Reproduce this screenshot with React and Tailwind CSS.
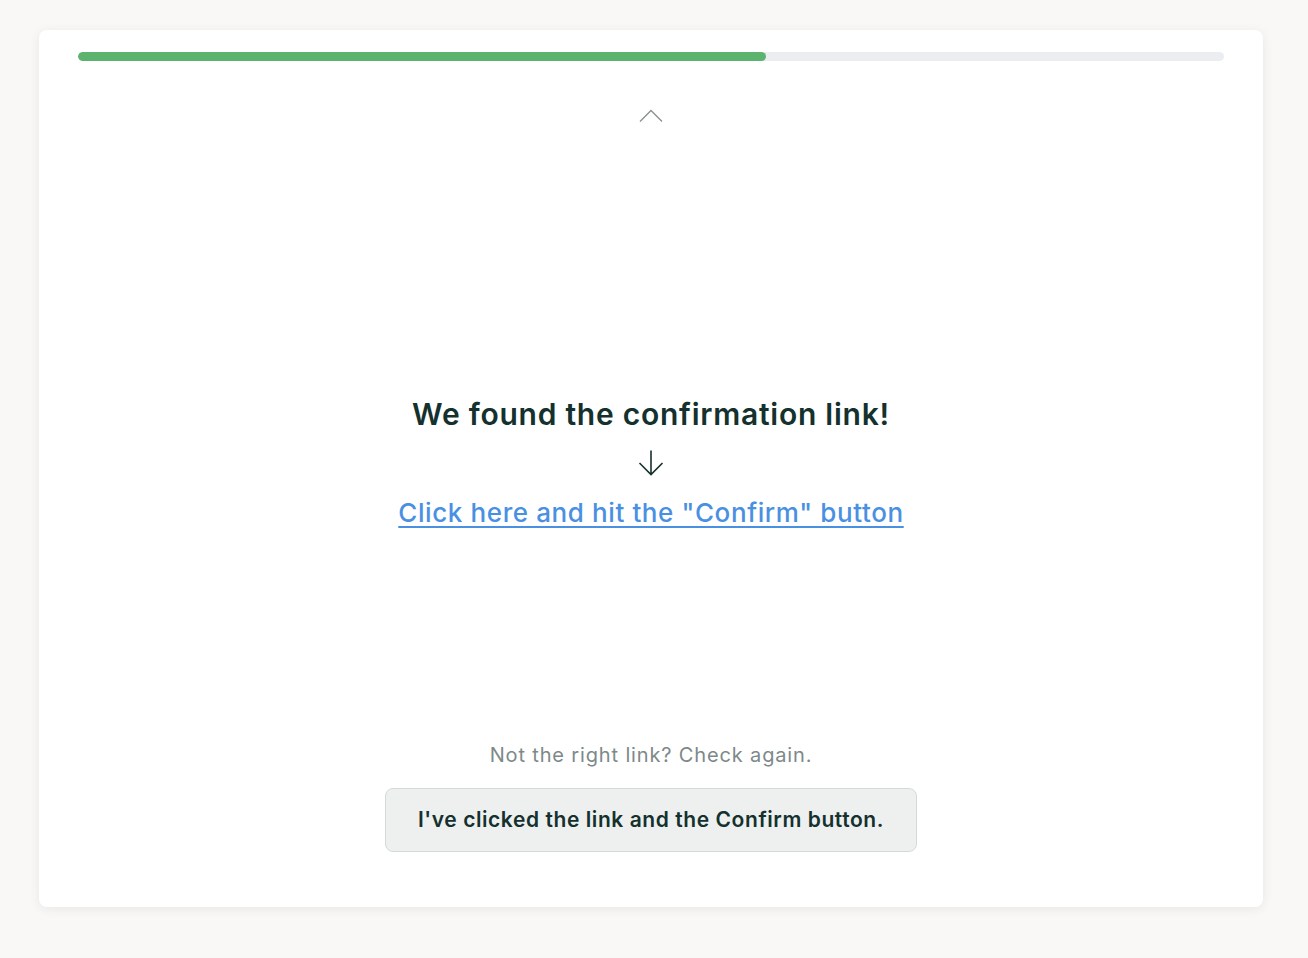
export default function App() {
  return (
    <div className="min-h-[958px] w-full bg-[#f9f8f6] pt-[30px] pb-[51px] pl-[39px] pr-[45px]" style={{ fontFamily: 'Inter, "Noto Sans", sans-serif' }}>
      <div className="h-[877px] rounded-[8px] bg-white shadow-[0_2px_12px_rgba(0,0,0,0.07)] flex flex-col items-center px-[39px] pt-[22px] pb-[55px]">
        <div className="w-full h-[9px] rounded-full bg-[#ebedf0] overflow-hidden">
          <div className="h-full w-[60%] rounded-full bg-[#5bb36e]"></div>
        </div>
        <svg className="mt-[47px]" width="26" height="16" viewBox="0 0 26 16" fill="none">
          <path d="M2 13.5 L13 2.5 L24 13.5" stroke="#8a9292" strokeWidth="1.4" />
        </svg>
        <h1 className="mt-[272px] text-[30px] leading-[36px] font-semibold text-[#14312e] tracking-[0.75px]">We found the confirmation link!</h1>
        <svg className="mt-[17px]" width="30" height="28" viewBox="0 0 30 28" fill="none">
          <path d="M15 1.5 V25.5 M3.5 14 L15 25.5 L26.5 14" stroke="#14312e" strokeWidth="1.6" />
        </svg>
        <a href="#" className="mt-[19px] text-[26px] leading-[34px] font-medium text-[#4a90e2] underline underline-offset-[4px] decoration-[2px] tracking-[0.6px]">Click here and hit the "Confirm" button</a>
        <div className="mt-auto flex flex-col items-center">
          <p className="text-[20px] leading-[28px] text-[#7d8989] tracking-[0.85px]">Not the right link? Check again.</p>
          <button className="mt-[19px] w-[532px] h-[64px] rounded-[8px] border border-[#d4d9d9] bg-[#eef0f0] text-[21px] font-semibold text-[#14312e] tracking-[0.57px]">I've clicked the link and the Confirm button.</button>
        </div>
      </div>
    </div>
  );
}
